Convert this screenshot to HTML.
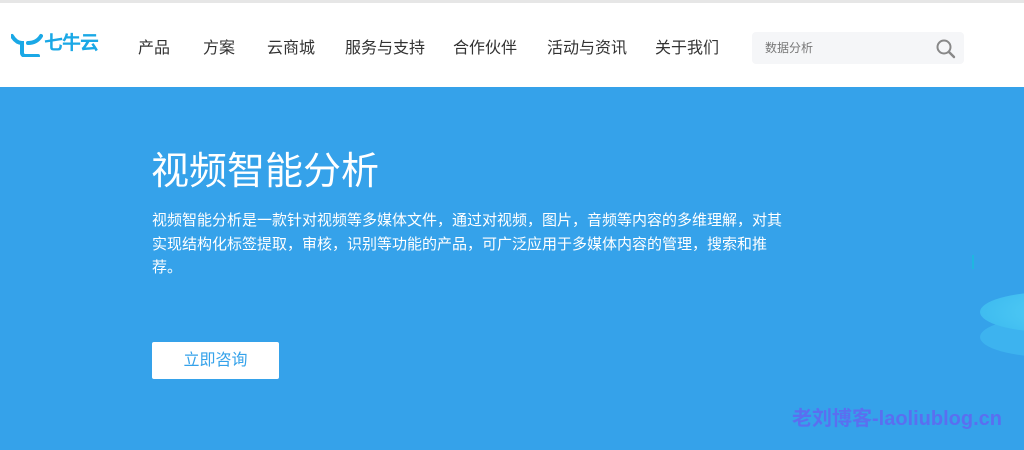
<!DOCTYPE html>
<html><head><meta charset="utf-8">
<style>
*{margin:0;padding:0;box-sizing:border-box}
body{width:1024px;height:450px;overflow:hidden;font-family:"Liberation Sans","Noto Sans CJK SC",sans-serif;background:#fff;position:relative}
.top{position:absolute;left:0;top:0;width:1024px;height:3px;background:#e6e6e6}
.hdr{position:absolute;left:0;top:3px;width:1024px;height:84px;background:#fff}
.nav a{position:absolute;top:35px;font-size:16px;color:#333;white-space:nowrap;line-height:22px}
.search{position:absolute;left:752px;top:29px;width:212px;height:32px;background:#f5f6f8;border-radius:4px}
.search span{position:absolute;left:13px;top:8px;font-size:12px;color:#777;line-height:16px}
.hero{position:absolute;left:0;top:87px;width:1024px;height:363px;background:#35a2ea;overflow:hidden}
h1{position:absolute;left:151px;top:62px;font-size:38px;font-weight:normal;color:#fff;line-height:46px;white-space:nowrap}
.p{position:absolute;left:152px;top:122px;font-size:15px;color:#fff;line-height:23.5px;white-space:nowrap}
.btn{position:absolute;left:152px;top:255px;width:127px;height:37px;background:#fff;border-radius:2px;color:#35a2ea;font-size:16px;text-align:center;line-height:37px}
.wm{position:absolute;left:792px;top:315px;font-size:20px;font-weight:bold;color:#5a6ff0;white-space:nowrap}
</style></head><body>
<div class="top"></div>
<div class="hdr">
<svg style="position:absolute;left:11px;top:30px" width="32" height="24" viewBox="0 0 32 24"><path d="M1 3 C4 8 7 10 11 10 L11 20 C11 22 13 23 15 23 L27 23" fill="none" stroke="#1aa8e6" stroke-width="4" stroke-linecap="round"/><path d="M30 3 C27 8 22 10 17 10" fill="none" stroke="#1aa8e6" stroke-width="4" stroke-linecap="round"/></svg>
<div style="position:absolute;left:44px;top:28px;font-size:19px;font-weight:bold;color:#1aa8e6;letter-spacing:-1px;line-height:26px">七牛云</div>
<div class="nav">
<a style="left:138px">产品</a><a style="left:203px">方案</a><a style="left:267px">云商城</a><a style="left:345px">服务与支持</a><a style="left:453px">合作伙伴</a><a style="left:547px">活动与资讯</a><a style="left:655px">关于我们</a>
</div>
<div class="search"><span>数据分析</span>
<svg style="position:absolute;left:184px;top:7px" width="20" height="20" viewBox="0 0 20 20"><circle cx="8" cy="8" r="6.5" fill="none" stroke="#888" stroke-width="2"/><path d="M13 13 L18 18" stroke="#888" stroke-width="2.4" stroke-linecap="round"/></svg>
</div>
</div>
<div class="hero">
<svg style="position:absolute;left:960px;top:140px" width="64" height="200"><defs><radialGradient id="g" cx="0.8" cy="0.5" r="0.8"><stop offset="0" stop-color="#5ad4f8"/><stop offset="1" stop-color="#3fbcf0"/></radialGradient></defs><ellipse cx="90" cy="110" rx="70" ry="20" fill="#3db3ef"/><ellipse cx="90" cy="85" rx="70" ry="20" fill="url(#g)"/><rect x="12" y="28" width="2" height="14" fill="#1fb6e0"/></svg>
<h1>视频智能分析</h1>
<div class="p">视频智能分析是一款针对视频等多媒体文件，通过对视频，图片，音频等内容的多维理解，对其<br>实现结构化标签提取，审核，识别等功能的产品，可广泛应用于多媒体内容的管理，搜索和推<br>荐。</div>
<div class="btn">立即咨询</div>
<div class="wm">老刘博客-laoliublog.cn</div>
</div>
</body></html>
